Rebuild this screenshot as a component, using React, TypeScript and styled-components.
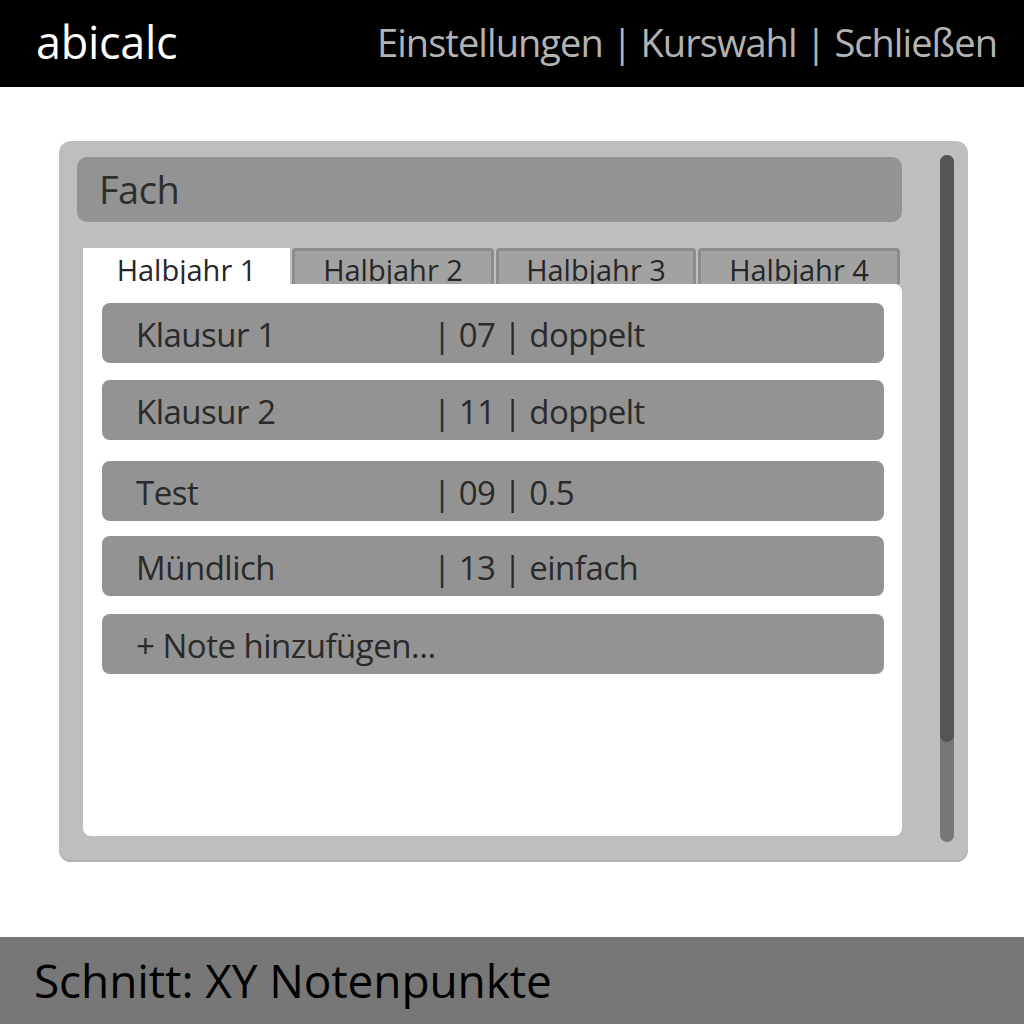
import React from "react";
import styled, { createGlobalStyle } from "styled-components";

const GlobalStyle = createGlobalStyle`
  html, body { margin: 0; padding: 0; background: #ffffff; }
  body { font-family: "Open Sans", "Noto Sans", sans-serif; }
  * { box-sizing: border-box; }
`;

const Page = styled.div`
  width: 1024px;
  height: 1024px;
  display: flex;
  flex-direction: column;
  overflow: hidden;
`;

const Header = styled.header`
  height: 87px;
  background: #000000;
  display: flex;
  align-items: center;
  justify-content: space-between;
  padding: 0 27px 4px 36px;
`;

const Brand = styled.div`
  color: #ffffff;
  font-size: 45px;
  letter-spacing: -0.3px;
`;

const Nav = styled.nav`
  color: #b3b3b3;
  font-size: 38px;
  letter-spacing: -0.95px;
  white-space: nowrap;
`;

const Main = styled.main`
  flex: 1;
  padding: 54px 56px 75px 59px;
  display: flex;
`;

const Panel = styled.section`
  flex: 1;
  background: #bebebe;
  border-radius: 12px;
  box-shadow: inset 0 -2px 0 #b2b2b2;
  padding: 14px 14px 20px 18px;
  display: flex;
  gap: 38px;
`;

const Column = styled.div`
  flex: 1;
  display: flex;
  flex-direction: column;
  padding: 2px 0 6px 0;
`;

const SubjectBar = styled.div`
  height: 65px;
  background: #939393;
  border-radius: 10px;
  color: #2e2e2e;
  font-size: 38px;
  display: flex;
  align-items: center;
  padding: 0 0 2px 22px;
  letter-spacing: -0.5px;
`;

const Tabs = styled.div`
  margin: 26px 1px 0 6px;
  display: grid;
  grid-template-columns: 207px 202px 200px 202px;
  column-gap: 2px;
  height: 36px;
`;

const Tab = styled.div<{ $active?: boolean }>`
  height: 36px;
  overflow: hidden;
  background: ${(p) => (p.$active ? "#ffffff" : "#a2a2a2")};
  border: ${(p) => (p.$active ? "none" : "3px solid #8c8c8c")};
  border-bottom: none;
  border-radius: ${(p) => (p.$active ? "0" : "4px 4px 0 0")};
  color: #262626;
  font-size: 29px;
  letter-spacing: 0;
  line-height: 1;
  text-align: center;
  padding-top: ${(p) => (p.$active ? "7px" : "4px")};
  white-space: nowrap;
`;

const Content = styled.div`
  flex: 1;
  margin-left: 6px;
  background: #ffffff;
  border-radius: 0 8px 8px 8px;
  padding: 19px 18px 0 19px;
  display: flex;
  flex-direction: column;
`;

const Row = styled.div<{ $top: number }>`
  margin-top: ${(p) => p.$top}px;
  height: 60px;
  background: #939393;
  border-radius: 8px;
  display: grid;
  grid-template-columns: 297px 1fr;
  align-items: center;
  padding: 2px 0 0 34px;
  color: #2a2a2a;
  font-size: 33px;
  letter-spacing: -0.5px;
  white-space: nowrap;
`;

const Cell = styled.span``;

const Scrollbar = styled.div`
  width: 14px;
  background: #777777;
  border-radius: 7px;
  display: flex;
  flex-direction: column;
`;

const Thumb = styled.div`
  height: 587px;
  background: #555555;
  border-radius: 7px;
`;

const Footer = styled.footer`
  height: 87px;
  background: #777777;
  display: flex;
  align-items: center;
  padding: 0 0 2px 34px;
  color: #000000;
  font-size: 46px;
  letter-spacing: -0.1px;
`;

const grades = [
  { top: 0, label: "Klausur 1", value: "| 07 | doppelt" },
  { top: 17, label: "Klausur 2", value: "| 11 | doppelt" },
  { top: 21, label: "Test", value: "| 09 | 0.5" },
  { top: 15, label: "Mündlich", value: "| 13 | einfach" },
];

export default function App() {
  return (
    <>
      <GlobalStyle />
      <Page>
        <Header>
          <Brand>abicalc</Brand>
          <Nav>Einstellungen | Kurswahl | Schließen</Nav>
        </Header>
        <Main>
          <Panel>
            <Column>
              <SubjectBar>Fach</SubjectBar>
              <Tabs>
                <Tab $active>Halbjahr 1</Tab>
                <Tab>Halbjahr 2</Tab>
                <Tab>Halbjahr 3</Tab>
                <Tab>Halbjahr 4</Tab>
              </Tabs>
              <Content>
                {grades.map((g) => (
                  <Row key={g.label} $top={g.top}>
                    <Cell>{g.label}</Cell>
                    <Cell>{g.value}</Cell>
                  </Row>
                ))}
                <Row $top={18}>
                  <Cell>+ Note hinzufügen...</Cell>
                </Row>
              </Content>
            </Column>
            <Scrollbar>
              <Thumb />
            </Scrollbar>
          </Panel>
        </Main>
        <Footer>Schnitt: XY Notenpunkte</Footer>
      </Page>
    </>
  );
}
